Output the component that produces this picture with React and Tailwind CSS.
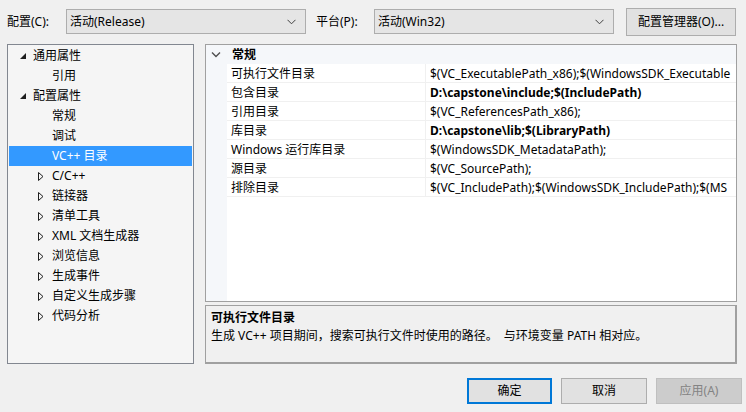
import React from "react";

const FONT = { fontFamily: '"Noto Sans", "Noto Sans CJK SC", sans-serif' };

function Chevron() {
  return (
    <svg width="9" height="6" viewBox="0 0 9 6" className="shrink-0">
      <path d="M0.5 0.8 L4.5 4.8 L8.5 0.8" fill="none" stroke="#404040" strokeWidth="1" />
    </svg>
  );
}

function Combo({ text }) {
  return (
    <div className="w-[240px] h-[25px] bg-[#e5e5e5] border border-[#adadad] flex items-center pl-[3px] pr-[9px] justify-between">
      <span className="text-[12px] text-black">{text}</span>
      <Chevron />
    </div>
  );
}

function Expanded() {
  return (
    <svg width="6" height="6" viewBox="0 0 6 6" className="shrink-0">
      <path d="M6 0 L6 6 L0 6 Z" fill="#1e1e1e" />
    </svg>
  );
}

function Collapsed() {
  return (
    <svg width="6" height="9" viewBox="0 0 6 9" className="shrink-0">
      <path d="M0.5 0.5 L5 4.5 L0.5 8.5 Z" fill="none" stroke="#1e1e1e" strokeWidth="1" />
    </svg>
  );
}

const treeItems = [
  { t: "通用属性", lvl: 0, kind: "exp" },
  { t: "引用", lvl: 1 },
  { t: "配置属性", lvl: 0, kind: "exp" },
  { t: "常规", lvl: 1 },
  { t: "调试", lvl: 1 },
  { t: "VC++ 目录", lvl: 1, sel: true },
  { t: "C/C++", lvl: 1, kind: "col" },
  { t: "链接器", lvl: 1, kind: "col" },
  { t: "清单工具", lvl: 1, kind: "col" },
  { t: "XML 文档生成器", lvl: 1, kind: "col" },
  { t: "浏览信息", lvl: 1, kind: "col" },
  { t: "生成事件", lvl: 1, kind: "col" },
  { t: "自定义生成步骤", lvl: 1, kind: "col" },
  { t: "代码分析", lvl: 1, kind: "col" },
];

const props = [
  { n: "可执行文件目录", v: "$(VC_ExecutablePath_x86);$(WindowsSDK_Executable" },
  { n: "包含目录", v: "D:\\capstone\\include;$(IncludePath)", b: true },
  { n: "引用目录", v: "$(VC_ReferencesPath_x86);" },
  { n: "库目录", v: "D:\\capstone\\lib;$(LibraryPath)", b: true },
  { n: "Windows 运行库目录", v: "$(WindowsSDK_MetadataPath);" },
  { n: "源目录", v: "$(VC_SourcePath);" },
  { n: "排除目录", v: "$(VC_IncludePath);$(WindowsSDK_IncludePath);$(MS" },
];

export default function App() {
  return (
    <div style={FONT} className="w-[746px] h-[412px] bg-[#f0f0f0] overflow-hidden text-[12px] text-black">
      {/* top bar */}
      <div className="flex items-start pl-[7px] pt-[8px] h-[36px]">
        <div className="w-[59px] h-[27px] flex items-center">配置(C):</div>
        <div className="mt-[1px]"><Combo text="活动(Release)" /></div>
        <div className="w-[58px] ml-[10px] h-[27px] flex items-center">平台(P):</div>
        <div className="mt-[1px]"><Combo text="活动(Win32)" /></div>
        <div className="ml-[12px] w-[110px] h-[28px] bg-[#e1e1e1] border border-[#adadad] flex items-center justify-center">
          配置管理器(O)...
        </div>
      </div>

      {/* main */}
      <div className="flex mt-[8px] pl-[7px]">
        <div className="w-[187px] h-[320px] border border-[#828790] bg-[#f5f5f5] pt-[1px] px-[1px]">
          {treeItems.map((it, i) => (
            <div
              key={i}
              className={`h-[20px] flex items-center ${it.sel ? "bg-[#3399ff] text-white" : ""}`}
            >
              {it.lvl === 0 ? (
                <div className="w-[24px] pl-[11px] flex items-center"><Expanded /></div>
              ) : (
                <div className="w-[43px] pl-[29px] flex items-center">
                  {it.kind === "col" ? <Collapsed /> : null}
                </div>
              )}
              <span>{it.t}</span>
            </div>
          ))}
        </div>

        <div className="ml-[11px] flex flex-col">
          <div className="w-[532px] h-[258px] border border-[#a0a0a0] bg-white flex flex-col overflow-hidden">
            <div className="h-[19px] flex items-center bg-[#f5f7fa] shrink-0">
              <div className="w-[21px] pl-[5px] flex items-center">
                <svg width="10" height="7" viewBox="0 0 10 7">
                  <path d="M1 1.5 L5 5.5 L9 1.5" fill="none" stroke="#505050" strokeWidth="1.4" />
                </svg>
              </div>
              <span className="font-bold pl-[5px]">常规</span>
            </div>
            {props.map((p, i) => (
              <div key={i} className="h-[19px] flex shrink-0">
                <div className="w-[21px] bg-[#f5f7fa] shrink-0" />
                <div className="w-[199px] shrink-0 border-b border-r border-[#f0f0f0] pl-[4px] pt-[1px] flex items-center whitespace-nowrap">
                  {p.n}
                </div>
                <div className={`flex-1 border-b border-[#f0f0f0] pl-[4px] pt-[1px] flex items-center whitespace-nowrap overflow-hidden ${p.b ? "font-bold" : ""}`}>
                  {p.v}
                </div>
              </div>
            ))}
            <div className="flex flex-1">
              <div className="w-[21px] bg-[#f5f7fa]" />
              <div className="flex-1 bg-white" />
            </div>
          </div>

          <div className="mt-[3px] w-[532px] h-[59px] border border-[#a0a0a0] border-r-2 border-b-2 bg-[#f0f0f0] pl-[5px] pt-[3px]">
            <div className="font-bold leading-[18px]">可执行文件目录</div>
            <div className="leading-[18px]">生成 VC++ 项目期间，搜索可执行文件时使用的路径。&nbsp; 与环境变量 PATH 相对应。</div>
          </div>
        </div>
      </div>

      {/* buttons */}
      <div className="flex mt-[14px] pl-[467px]">
        <div className="w-[85px] h-[26px] border-2 border-[#0078d7] bg-[#e1e1e1] flex items-center justify-center">确定</div>
        <div className="ml-[9px] w-[86px] h-[26px] border border-[#adadad] bg-[#e1e1e1] flex items-center justify-center">取消</div>
        <div className="ml-[9px] w-[86px] h-[26px] border border-[#bfbfbf] bg-[#cccccc] text-[#838383] flex items-center justify-center">应用(A)</div>
      </div>
    </div>
  );
}
